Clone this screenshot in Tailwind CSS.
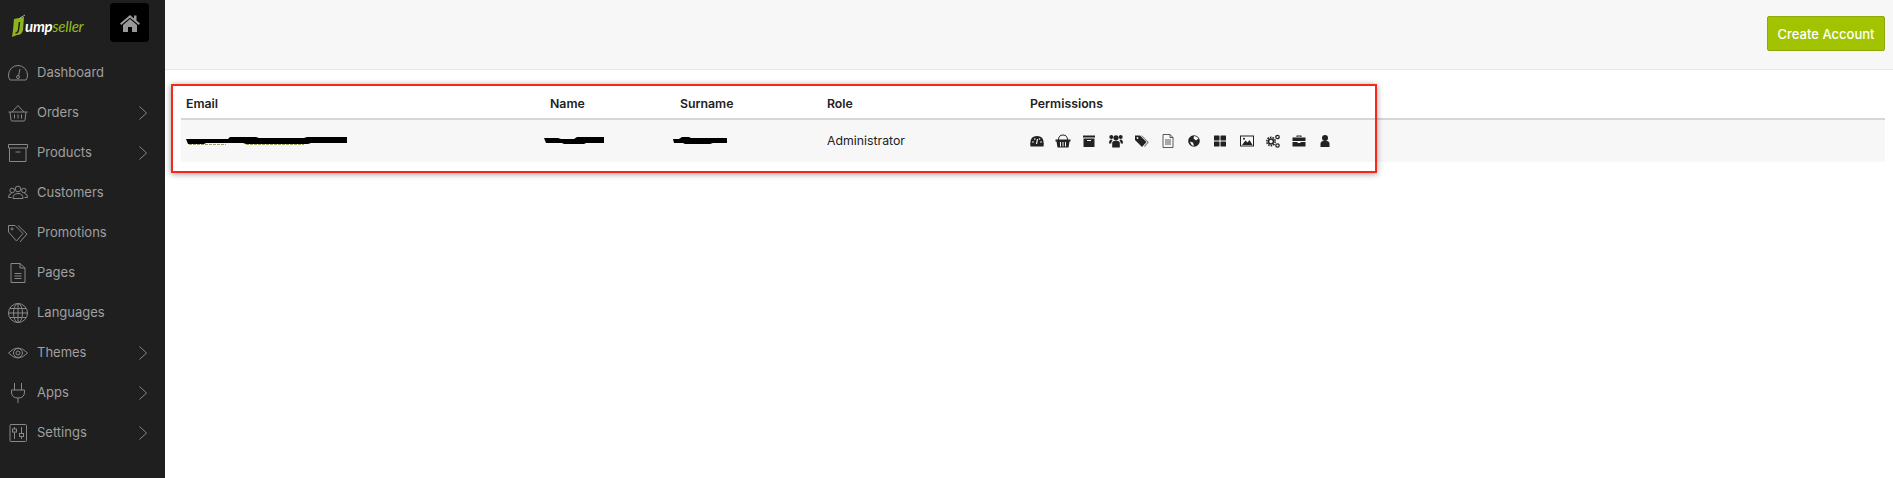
<!DOCTYPE html>
<html lang="en">
<head>
    <meta charset="UTF-8">
    <title>Accounts</title>
    <script src="https://cdn.jsdelivr.net/npm/@tailwindcss/browser@4"></script>
</head>
<body class="bg-white h-[478px] overflow-hidden font-['Inter',sans-serif]">
<div class="flex h-[478px]">
    <!-- sidebar -->
    <aside class="w-[165px] shrink-0 bg-[#1f1f1f] text-[#a0a0a0] text-[13px]">
        <div class="h-[53px] flex items-start">
            <div class="w-[110px] pl-[11px] pt-[15px] h-[37px] flex items-center">
                <svg width="14" height="21" viewBox="0 0 14 21" class="shrink-0 overflow-visible"><path d="M3 3 L13 1 L12 14 Q11 19 6 19 L1 21 L2 14 Z" fill="#8fb31c"/><path d="M9 2 L14 -1" stroke="#aaa" stroke-width="1"/><path d="M8.500 6 L7.500 14 Q7 17 4.500 17" stroke="#1f1f1f" stroke-width="1.500" fill="none"/></svg>
                <span class="italic font-['Lato',sans-serif] text-[15px] leading-none font-bold text-white tracking-[-0.2px]">ump<span class="text-[#93bd1e] font-normal">seller</span></span>
            </div>
            <div class="ml-auto mr-[16px] mt-[3px] w-[39px] h-[39px] bg-black rounded-[4px] flex items-center justify-center">
                <svg width="20" height="18" viewBox="0 0 20 18" fill="#999"><path d="M10 1 L0 9.500 L1.300 11 L10 3.700 L18.700 11 L20 9.500 L16.500 6.500 L16.500 1.500 L14 1.500 L14 4.400 Z"/><path d="M10 5 L3 11 L3 18 L8 18 L8 13 L12 13 L12 18 L17 18 L17 11 Z"/></svg>
            </div>
        </div>
        <nav class="flex flex-col">
            <a class="h-[40px] flex items-center pl-[8px] pr-[18px]">
                <svg class="w-[20px] h-[20px] mr-[9px]" viewBox="0 0 20 20" fill="none" stroke="#888" stroke-width="1"><path d="M2 17 Q0.500 15 0.500 12 A9.500 9.500 0 0 1 19.500 12 Q19.500 15 18 17 Z"/><path d="M12 6 L10.500 13"/><circle cx="10" cy="14" r="1.500"/></svg>
                <span>Dashboard</span>
            </a>
            <a class="h-[40px] flex items-center pl-[8px] pr-[18px]">
                <svg class="w-[20px] h-[20px] mr-[9px]" viewBox="0 0 20 20" fill="none" stroke="#888" stroke-width="1"><path d="M0.500 9 H19.500 M2 9 L3 17 Q3.200 18 4 18 H16 Q16.800 18 17 17 L18 9 M4 9 L10 2.500 L16 9 M6.500 11.500 V15.500 M10 11.500 V15.500 M13.500 11.500 V15.500"/></svg>
                <span>Orders</span>
                <svg class="ml-auto w-[8px] h-[14px]" viewBox="0 0 8 14" fill="none" stroke="#888" stroke-width="1"><path d="M0.500 0.500 L7.500 7 L0.500 13.500"/></svg>
            </a>
            <a class="h-[40px] flex items-center pl-[8px] pr-[18px]">
                <svg class="w-[20px] h-[20px] mr-[9px]" viewBox="0 0 20 20" fill="none" stroke="#888" stroke-width="1"><path d="M0.500 1.500 H19.500 V5 H0.500 Z M1.500 5 V18.500 H18 V5 M7.500 9 H12.500"/></svg>
                <span>Products</span>
                <svg class="ml-auto w-[8px] h-[14px]" viewBox="0 0 8 14" fill="none" stroke="#888" stroke-width="1"><path d="M0.500 0.500 L7.500 7 L0.500 13.500"/></svg>
            </a>
            <a class="h-[40px] flex items-center pl-[8px] pr-[18px]">
                <svg class="w-[20px] h-[20px] mr-[9px]" viewBox="0 0 20 20" fill="none" stroke="#888" stroke-width="1"><circle cx="10" cy="6" r="2.800"/><circle cx="4.200" cy="7.500" r="2.300"/><circle cx="15.800" cy="7.500" r="2.300"/><path d="M5 15.500 Q5 10.500 10 10.500 Q15 10.500 15 15.500 Z M3.500 14.500 H0.500 Q0.500 10.500 3.500 10.500 M16.500 14.500 H19.500 Q19.500 10.500 16.500 10.500"/></svg>
                <span>Customers</span>
            </a>
            <a class="h-[40px] flex items-center pl-[8px] pr-[18px]">
                <svg class="w-[20px] h-[20px] mr-[9px]" viewBox="0 0 20 20" fill="none" stroke="#888" stroke-width="1"><path d="M0.500 2.500 H7 L15 10.500 L8.500 18 L0.500 9 Z"/><circle cx="4" cy="6" r="1"/><path d="M10 2.500 L19 11 L12 19"/></svg>
                <span>Promotions</span>
            </a>
            <a class="h-[40px] flex items-center pl-[8px] pr-[18px]">
                <svg class="w-[20px] h-[20px] mr-[9px]" viewBox="0 0 20 20" fill="none" stroke="#888" stroke-width="1"><path d="M3 0.500 H12 L17 5 V19.500 H3 Z M12 0.500 V5 H17 M6.500 10.500 H13.500 M6.500 13 H13.500 M6.500 15.500 H13.500"/></svg>
                <span>Pages</span>
            </a>
            <a class="h-[40px] flex items-center pl-[8px] pr-[18px]">
                <svg class="w-[20px] h-[20px] mr-[9px]" viewBox="0 0 20 20" fill="none" stroke="#888" stroke-width="1"><circle cx="10" cy="10" r="9.500"/><ellipse cx="10" cy="10" rx="4.500" ry="9.500"/><path d="M10 0.500 V19.500 M0.500 10 H19.500 M2 5.500 H18 M2 14.500 H18"/></svg>
                <span>Languages</span>
            </a>
            <a class="h-[40px] flex items-center pl-[8px] pr-[18px]">
                <svg class="w-[20px] h-[20px] mr-[9px]" viewBox="0 0 20 20" fill="none" stroke="#888" stroke-width="1"><path d="M0.500 10 Q10 0 19.500 10 Q10 20 0.500 10 Z"/><circle cx="10" cy="10" r="4.500"/><circle cx="10" cy="10" r="2"/></svg>
                <span>Themes</span>
                <svg class="ml-auto w-[8px] h-[14px]" viewBox="0 0 8 14" fill="none" stroke="#888" stroke-width="1"><path d="M0.500 0.500 L7.500 7 L0.500 13.500"/></svg>
            </a>
            <a class="h-[40px] flex items-center pl-[8px] pr-[18px]">
                <svg class="w-[20px] h-[20px] mr-[9px]" viewBox="0 0 20 20" fill="none" stroke="#888" stroke-width="1"><path d="M6.500 0 V7 M13.500 0 V7 M3.500 7 H16.500 V9 Q16.500 15 10 15 Q3.500 15 3.500 9 Z M10 15 V20"/></svg>
                <span>Apps</span>
                <svg class="ml-auto w-[8px] h-[14px]" viewBox="0 0 8 14" fill="none" stroke="#888" stroke-width="1"><path d="M0.500 0.500 L7.500 7 L0.500 13.500"/></svg>
            </a>
            <a class="h-[40px] flex items-center pl-[8px] pr-[18px]">
                <svg class="w-[20px] h-[20px] mr-[9px]" viewBox="0 0 20 20" fill="none" stroke="#888" stroke-width="1"><rect x="2" y="1.500" width="16.500" height="17" rx="1"/><path d="M6.500 4 V16 M13.500 4 V16"/><rect x="4.500" y="6" width="4" height="3" fill="#1f1f1f"/><rect x="11.500" y="10.500" width="4" height="3" fill="#1f1f1f"/></svg>
                <span>Settings</span>
                <svg class="ml-auto w-[8px] h-[14px]" viewBox="0 0 8 14" fill="none" stroke="#888" stroke-width="1"><path d="M0.500 0.500 L7.500 7 L0.500 13.500"/></svg>
            </a>
        </nav>
    </aside>

    <main class="flex-1 relative">
        <!-- top bar -->
        <header class="h-[70px] bg-[#f7f7f7] border-b border-[#e6e6e6] flex items-start justify-end pr-[8px] pt-[16px]">
            <button class="w-[118px] h-[35px] pt-[2px] bg-[#a2c400] border border-[#8fa90a] rounded-[2px] text-white text-[13px] font-medium">Create Account</button>
        </header>

        <!-- accounts table -->
        <section class="pl-[16px] pr-[8px] pt-[15px] text-[#222] text-[12.300px]">
            <div class="grid grid-cols-[364px_130px_147px_203px_1fr] h-[35px] items-center pl-[5px] pt-[5px] border-b-2 border-[#d6d6d6] font-semibold">
                <div>Email</div>
                <div>Name</div>
                <div>Surname</div>
                <div>Role</div>
                <div>Permissions</div>
            </div>
            <div class="grid grid-cols-[364px_130px_147px_203px_1fr] h-[42px] items-center pl-[5px] bg-[#f7f7f7]">
                <!-- blacked out values -->
                <div><svg class="-mt-[2px] blur-[0.4px]" width="161" height="9" viewBox="0 0 161 9"><path d="M0 3 H42 L44 1 H70 L73 2 H118 L121 1 H161 V7 H125 L122 8 H60 L57 7 H20 L18 8 H2 Z" fill="#000"/><path d="M3 8.500 H40 M60 8.500 H118" stroke="#7f9440" stroke-width="0.800" stroke-dasharray="3 1"/></svg></div>
                <div><svg class="-mt-[2px] -ml-[6px] blur-[0.4px]" width="60" height="9" viewBox="0 0 60 9"><path d="M0 2 H14 L17 3 H30 L33 1 H60 V7 H42 L40 8 H20 L18 7 H2 Z" fill="#000"/></svg></div>
                <div><svg class="-mt-[2px] -ml-[7px] blur-[0.4px]" width="54" height="9" viewBox="0 0 54 9"><path d="M0 3 H6 L9 1 H16 L18 2 H54 V7 H40 L37 8 H12 L10 7 H1 Z" fill="#000"/></svg></div>
                <div>Administrator</div>
                <div class="flex items-center gap-[12.200px] text-[#222]">
                    <svg class="w-[14px] h-[14px]" viewBox="0 0 14 14" fill="currentColor"><path d="M0.500 12.500 Q-1 2 7 2 Q15 2 13.500 12.500 Z"/><path d="M7.500 5 L6.500 10" stroke="#f7f7f7" stroke-width="1.200"/><circle cx="3" cy="8" r="0.800" fill="#f7f7f7"/><circle cx="11" cy="8" r="0.800" fill="#f7f7f7"/><circle cx="4.800" cy="5" r="0.800" fill="#f7f7f7"/><circle cx="9.500" cy="5" r="0.800" fill="#f7f7f7"/></svg>
                    <svg class="w-[14px] h-[14px] overflow-visible" viewBox="0 0 14 14" fill="none" stroke="currentColor"><path d="M2.500 6 Q2.500 1 7 1 Q11.500 1 11.500 6"/><path d="M-0.500 5.500 H14.500 V7.500 H13.500 L12.500 13.500 H1.500 L0.500 7.500 H-0.500 Z" fill="currentColor" stroke="none"/><path d="M4.500 8 V12.500 M7 8 V12.500 M9.500 8 V12.500" stroke="#f7f7f7"/></svg>
                    <svg class="w-[14px] h-[14px]" viewBox="0 0 14 14" fill="currentColor"><path d="M1 1.500 H13 V3.500 H1 Z M1.500 4.500 H12.500 V13 H1.500 Z"/><path d="M5 6.500 H9" stroke="#f7f7f7"/></svg>
                    <svg class="w-[14px] h-[14px]" viewBox="0 0 14 14" fill="currentColor"><circle cx="7" cy="3.800" r="2.600"/><circle cx="2.300" cy="3" r="2"/><circle cx="11.700" cy="3" r="2"/><path d="M3.200 13.500 V9 Q3.200 6.800 7 6.800 Q10.800 6.800 10.800 9 V13.500 Z M0 9.500 Q0 5.500 2.500 5.500 L3.500 6.500 Q2.200 7.500 2.200 9.500 Z M14 9.500 Q14 5.500 11.500 5.500 L10.500 6.500 Q11.800 7.500 11.800 9.500 Z"/></svg>
                    <svg class="w-[14px] h-[14px]" viewBox="0 0 14 14" fill="currentColor"><path d="M0 1.500 H5 L11.500 8 L7 13 L0 6 Z"/><path d="M7 1.500 L13.800 8.300 L9.800 13 L9 12.200 L12.500 8.200 L6 1.500 Z" fill="#777"/><circle cx="2.500" cy="4" r="0.900" fill="#f7f7f7"/></svg>
                    <svg class="w-[14px] h-[14px]" viewBox="0 0 14 14" fill="none" stroke="#333" stroke-width="0.800"><path d="M2 0.500 H9 L12 3.500 V13.500 H2 Z M9 0.500 V3.500 H12 M4 6 H10 M4 8 H10 M4 10 H10"/></svg>
                    <svg class="w-[14px] h-[14px]" viewBox="0 0 14 14" fill="currentColor"><circle cx="7" cy="7" r="5.800"/><path d="M7 2 Q10 2 11.500 4.500 L9 6.500 L6.500 4.500 Z M3 7.500 L6 8.500 L7 12 Q4 11.500 3 7.500 Z" fill="#f7f7f7"/></svg>
                    <svg class="w-[14px] h-[14px]" viewBox="0 0 14 14" fill="currentColor"><rect x="1" y="1.500" width="5.500" height="5" rx="0.500"/><rect x="7.500" y="1.500" width="5.500" height="5" rx="0.500"/><rect x="1" y="7.500" width="5.500" height="5" rx="0.500"/><rect x="7.500" y="7.500" width="5.500" height="5" rx="0.500"/></svg>
                    <svg class="w-[14px] h-[14px]" viewBox="0 0 14 14" fill="none" stroke="currentColor"><rect x="0.500" y="2" width="13" height="10"/><path d="M2 11 L5.500 6.500 L7.500 8.500 L9.500 6 L12.500 11 Z" fill="currentColor" stroke="none"/><circle cx="4" cy="4.800" r="1" fill="currentColor" stroke="none"/></svg>
                    <svg class="w-[14px] h-[14px]" viewBox="0 0 14 14" fill="none" stroke="currentColor"><circle cx="5" cy="7.500" r="4.200" stroke-width="1.600" stroke-dasharray="1.600 1" /><circle cx="5" cy="7.500" r="2.500" stroke-width="1.600"/><circle cx="11.500" cy="3" r="1.700" stroke-width="1.300"/><circle cx="11.500" cy="11.500" r="1.700" stroke-width="1.300"/></svg>
                    <svg class="w-[14px] h-[14px]" viewBox="0 0 14 14" fill="currentColor"><path d="M4.500 3 V1.500 H9.500 V3 H8.500 V2.500 H5.500 V3 Z"/><path d="M0.500 3.500 H13.500 V7 H0.500 Z M0.500 8 H5.500 V9 H8.500 V8 H13.500 V12.500 H0.500 Z"/></svg>
                    <svg class="w-[14px] h-[14px]" viewBox="0 0 14 14" fill="currentColor"><circle cx="7" cy="4" r="3"/><path d="M2.500 13 V10 Q2.500 7 5.500 7 H8.500 Q11.500 7 11.500 10 V13 Z"/></svg>
                </div>
            </div>
        </section>

        <!-- annotation -->
        <div class="absolute left-[6px] top-[84px] w-[1206px] h-[89px] border-2 border-[#f5281a] shadow-[0_1px_6px_rgba(0,0,0,0.4)] pointer-events-none"></div>
    </main>
</div>
</body>
</html>
